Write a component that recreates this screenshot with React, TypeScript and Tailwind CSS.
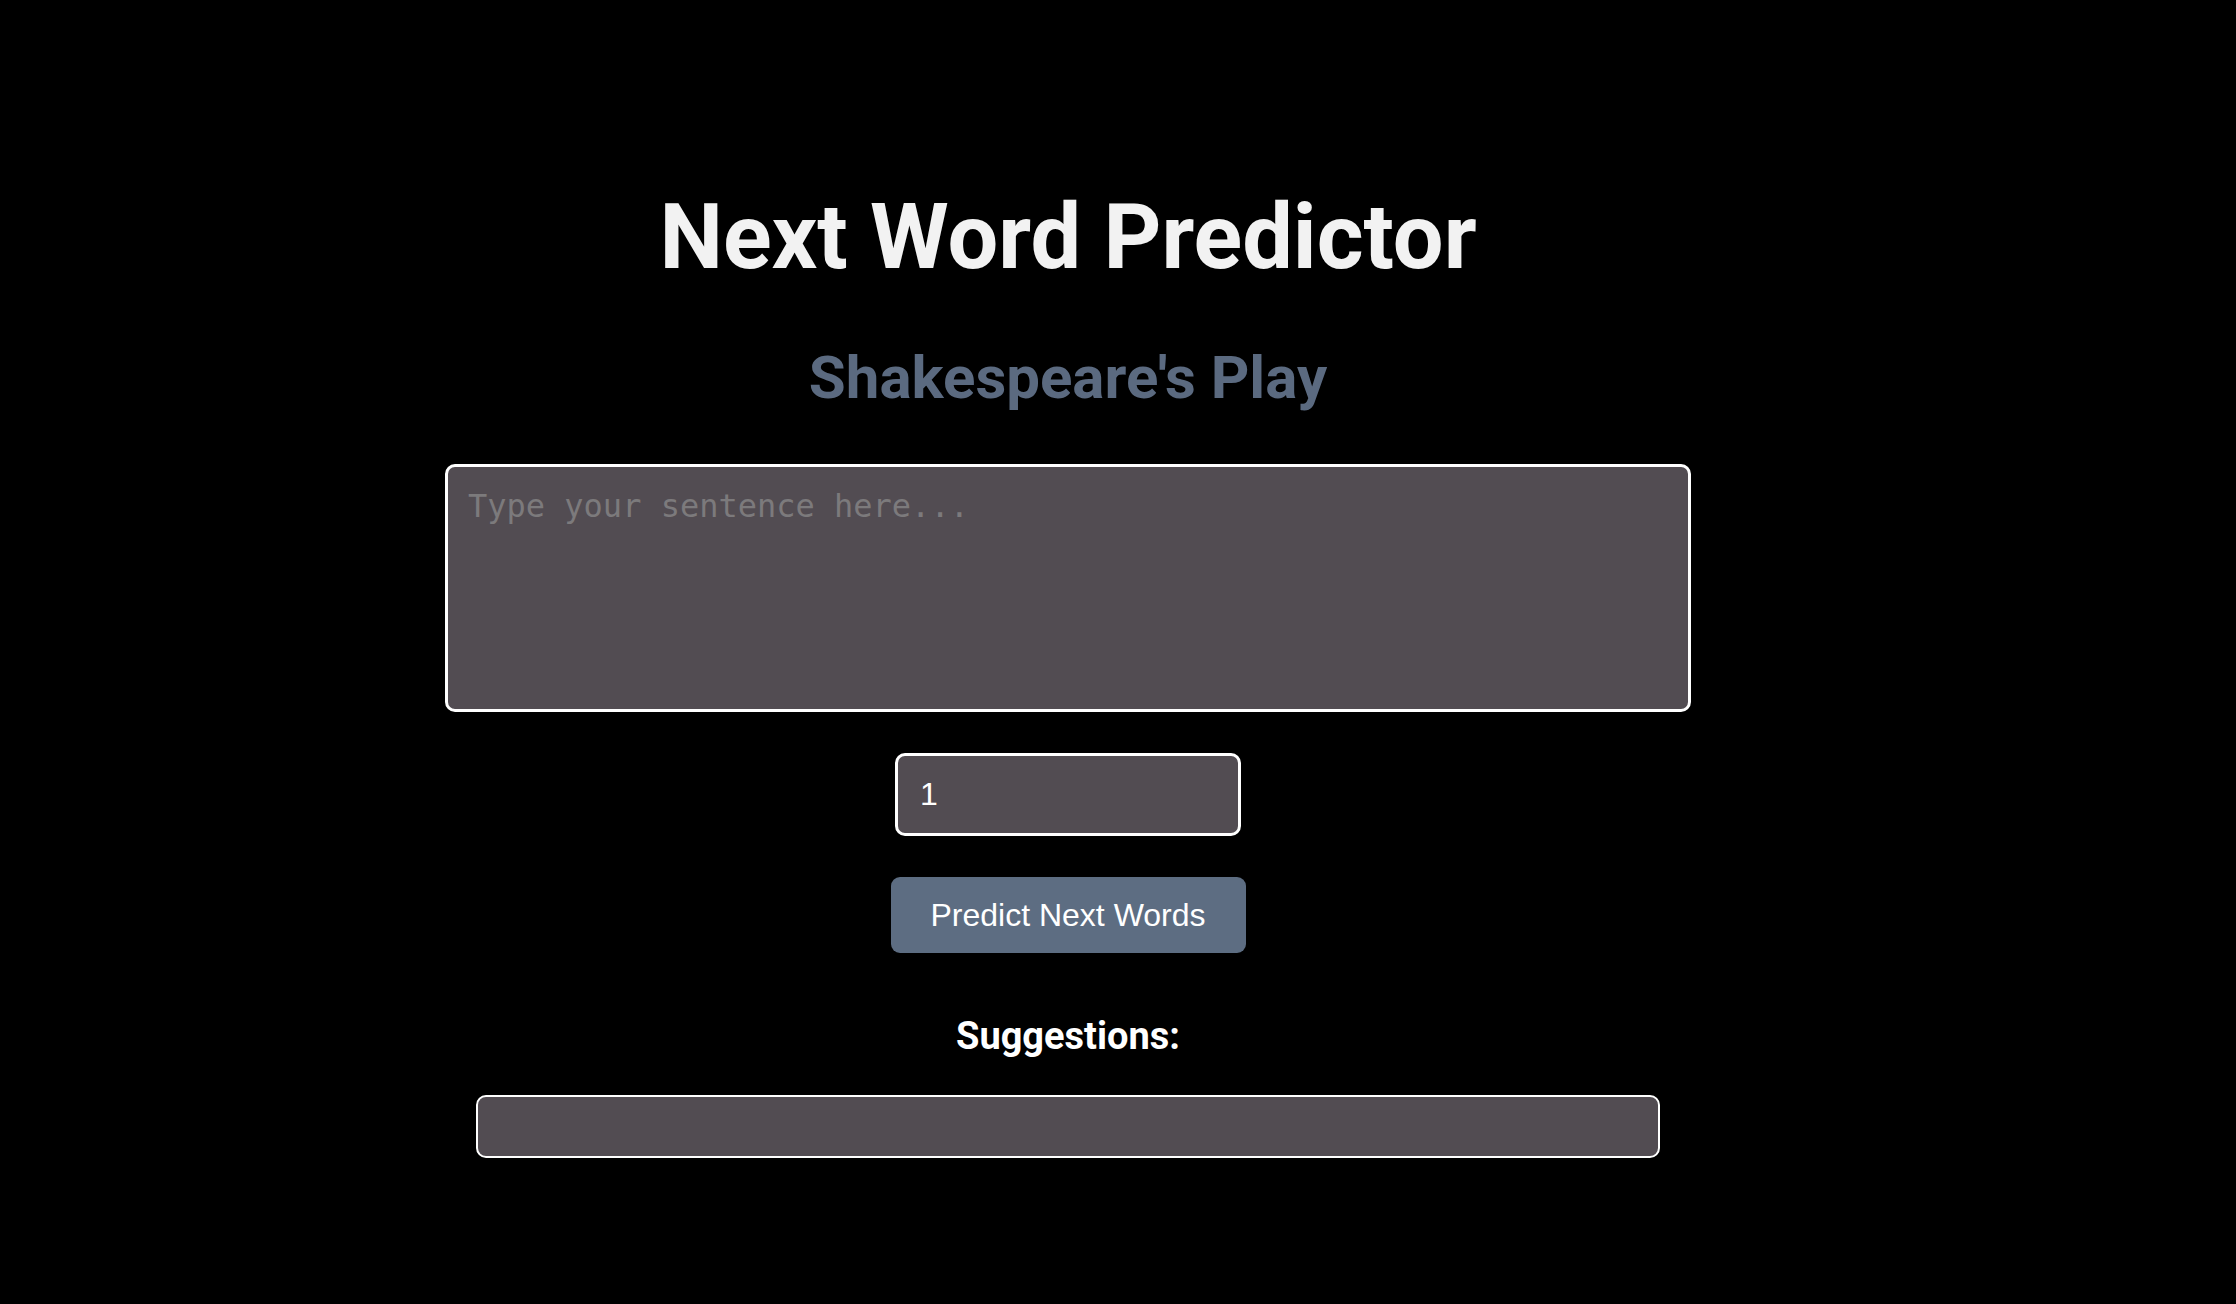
import React, { useState } from "react";

const App: React.FC = () => {
  const [sentence, setSentence] = useState("");
  const [count, setCount] = useState("1");
  const [suggestions] = useState<string[]>([]);

  return (
    <div className="min-h-screen w-full bg-black">
      <div className="flex w-[2136px] flex-col items-center pt-[170px] font-['Roboto',sans-serif]">
        <h1 className="text-[90px] font-bold text-[#f2f2f2]">Next Word Predictor</h1>
        <h2 className="mt-[28px] text-[60px] font-bold text-[#5b6a80]">Shakespeare's Play</h2>

        <textarea
          value={sentence}
          onChange={(e) => setSentence(e.target.value)}
          placeholder="Type your sentence here..."
          className="mt-[41px] h-[248px] w-[1246px] resize-none rounded-[10px] border-[3px] border-white bg-[#524c52] px-[20px] py-[15px] font-['DejaVu_Sans_Mono',monospace] text-[32px] text-white outline-none placeholder:text-[#7c7a7c]"
        />

        <input
          type="text"
          value={count}
          onChange={(e) => setCount(e.target.value)}
          className="mt-[41px] h-[83px] w-[346px] rounded-[10px] border-[3px] border-white bg-[#524c52] px-[22px] font-['Liberation_Sans',sans-serif] text-[32px] text-white outline-none"
        />

        <button
          type="button"
          className="mt-[41px] h-[76px] w-[355px] rounded-[9px] bg-[#5d6d82] font-['Liberation_Sans',sans-serif] text-[32px] text-white"
        >
          Predict Next Words
        </button>

        <h3 className="mt-[55px] text-[38px] font-bold text-white">Suggestions:</h3>

        <div className="mt-[30px] h-[63px] w-[1184px] rounded-[10px] border-2 border-white bg-[#524c52] px-5 text-white">
          {suggestions.map((s) => (
            <span key={s} className="mr-4">
              {s}
            </span>
          ))}
        </div>
      </div>
    </div>
  );
};

export default App;
